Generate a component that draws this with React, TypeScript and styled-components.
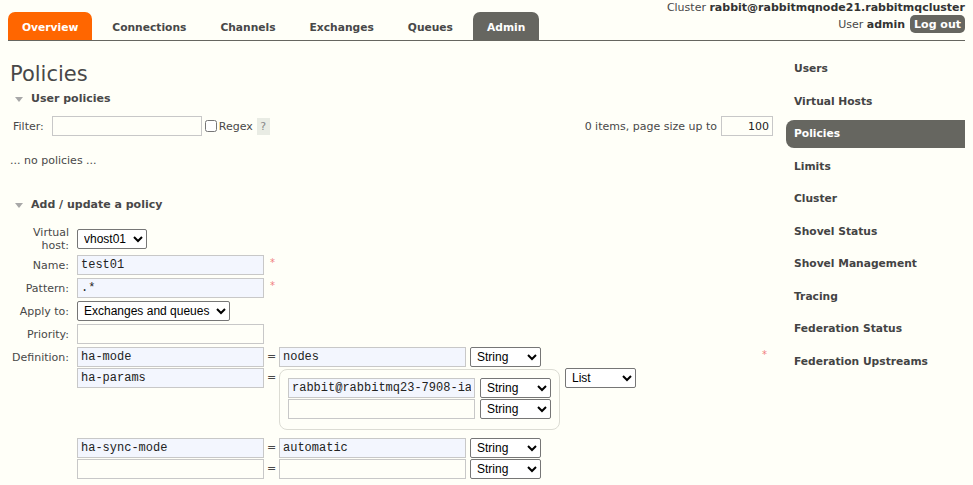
import React from "react";
import styled, { createGlobalStyle, css } from "styled-components";

const GlobalStyle = createGlobalStyle`
  html, body {
    margin: 0;
    background: #fffff8;
  }
  body {
    font: 11px "DejaVu Sans", Verdana, sans-serif;
    color: #484848;
  }
  * {
    box-sizing: border-box;
  }
`;

const Header = styled.header`
  display: flex;
  justify-content: space-between;
  align-items: flex-end;
  margin: 0 8px;
  height: 41px;
  border-bottom: 1px solid #666660;
`;

const Tabs = styled.ul`
  display: flex;
  gap: 6px;
  list-style: none;
  margin: 0;
  padding: 0;
`;

const Tab = styled.li<{ $tone?: "orange" | "grey" }>`
  height: 28px;
  padding: 2px 14px 0;
  display: flex;
  align-items: center;
  font-size: 10.7px;
  font-weight: bold;
  border-radius: 7px 7px 0 0;
  color: #484848;
  ${(p) =>
    p.$tone === "orange" &&
    css`
      background: #ff6600;
      color: #fff;
    `}
  ${(p) =>
    p.$tone === "grey" &&
    css`
      background: #666660;
      color: #fff;
    `}
`;

const Session = styled.div`
  align-self: stretch;
  display: flex;
  flex-direction: column;
  align-items: flex-end;
  padding-top: 1px;
  line-height: 13px;

  b {
    color: #333;
  }
`;

const UserLine = styled.div`
  display: flex;
  align-items: center;
  gap: 5px;
  margin-top: 1px;
`;

const LogoutButton = styled.button`
  height: 18px;
  padding: 0 4px;
  border: none;
  border-radius: 5px;
  background: #666660;
  color: #fff;
  font: bold 11px "DejaVu Sans", Verdana, sans-serif;
`;

const Page = styled.div`
  display: flex;
  align-items: flex-start;
`;

const Main = styled.main`
  flex: 1;
  min-width: 0;
  padding: 0 13px 0 10px;
`;

const Title = styled.h1`
  margin: 21px 0 0;
  font-size: 21px;
  line-height: 24px;
  font-weight: normal;
  color: #484848;
`;

const SectionHead = styled.h2<{ $top: number }>`
  display: flex;
  align-items: center;
  gap: 8px;
  margin: ${(p) => p.$top}px 0 0;
  padding-left: 5px;
  font-size: 11px;
  line-height: 14px;
  font-weight: bold;
  color: #484848;

  &::before {
    content: "";
    border-left: 4.5px solid transparent;
    border-right: 4.5px solid transparent;
    border-top: 5px solid #a8a8a8;
  }
`;

const FilterBar = styled.div`
  display: flex;
  align-items: center;
  height: 20px;
  margin-top: 10px;
  padding-left: 3px;
`;

const Field = styled.input<{ $w: number; $filled?: boolean; $right?: boolean }>`
  width: ${(p) => p.$w}px;
  height: 20px;
  padding: 0 3px;
  border: 1px solid #c8c8c8;
  background: ${(p) => (p.$filled ? "#f3f6fe" : "#fffff8")};
  font: 12px "Liberation Mono", "Courier New", monospace;
  color: #222;
  text-align: ${(p) => (p.$right ? "right" : "left")};
  outline: none;
`;

const PlainField = styled(Field)`
  font: 11px "DejaVu Sans", Verdana, sans-serif;
`;

const Check = styled.input`
  margin: 0 2px 0 3px;
  width: 12px;
  height: 12px;
`;

const Help = styled.span`
  display: inline-block;
  width: 13px;
  height: 17px;
  line-height: 17px;
  text-align: center;
  background: #e9ece4;
  color: #888;
`;

const Spacer = styled.div`
  flex: 1;
`;

const Empty = styled.p`
  margin: 18px 0 0;
  line-height: 14px;
`;

const Form = styled.div`
  display: grid;
  grid-template-columns: 59px 1fr;
  column-gap: 8px;
  row-gap: 3px;
  margin-top: 14px;
  align-items: center;
`;

const Label = styled.label<{ $top?: boolean }>`
  text-align: right;
  line-height: 13px;
  ${(p) =>
    p.$top &&
    css`
      align-self: start;
      padding-top: 4px;
    `}
`;

const Line = styled.div`
  display: flex;
  align-items: flex-start;
`;

const Select = styled.select<{ $w: number }>`
  width: ${(p) => p.$w}px;
  height: 20px;
  font: 12px "Liberation Sans", Arial, sans-serif;
  color: #000;
  background: #fff;
  border: 1px solid #767676;
  border-radius: 2px;
  padding: 0 2px;
`;

const Star = styled.span`
  color: #f08080;
  font-size: 10px;
  line-height: 10px;
  margin: 3px 0 0 6px;
`;

const Definition = styled.div`
  display: flex;
  flex-direction: column;
  gap: 1px;
`;

const Pair = styled.div<{ $gapBelow?: number }>`
  display: flex;
  align-items: flex-start;
  margin-bottom: ${(p) => p.$gapBelow || 0}px;
`;

const Eq = styled.span`
  width: 15px;
  line-height: 20px;
  text-align: center;
`;

const TypeSelect = styled(Select)<{ $gap?: number }>`
  margin-left: ${(p) => p.$gap ?? 4}px;
`;

const ListBox = styled.div`
  display: flex;
  flex-direction: column;
  gap: 1px;
  margin-top: 1px;
  padding: 8px 8px 10px;
  border: 1px solid #dcdcd4;
  border-radius: 8px;
`;

const DefStar = styled(Star)`
  margin-left: auto;
  margin-right: 6px;
`;

const HelpLine = styled.div`
  display: flex;
  align-items: center;
  gap: 4px;
  margin-top: 4px;
  padding-left: 3px;
  line-height: 17px;
  white-space: nowrap;
`;

const Sidebar = styled.nav`
  display: flex;
  flex-direction: column;
  width: 179px;
  margin: 12px 8px 0 0;
`;

const NavItem = styled.a<{ $active?: boolean }>`
  display: block;
  margin: 2.25px 0;
  padding: 7px 8px;
  line-height: 14px;
  font-size: 10.7px;
  font-weight: bold;
  color: #444;
  text-decoration: none;
  border-radius: 8px 0 0 8px;
  ${(p) =>
    p.$active &&
    css`
      background: #666660;
      color: #fff;
    `}
`;

const tabs = ["Overview", "Connections", "Channels", "Exchanges", "Queues", "Admin"];
const adminLinks = [
  "Users",
  "Virtual Hosts",
  "Policies",
  "Limits",
  "Cluster",
  "Shovel Status",
  "Shovel Management",
  "Tracing",
  "Federation Status",
  "Federation Upstreams",
];

export default function App(): React.ReactElement {
  return (
    <>
      <GlobalStyle />
      <Header>
        <Tabs>
          {tabs.map((t) => (
            <Tab
              key={t}
              $tone={t === "Overview" ? "orange" : t === "Admin" ? "grey" : undefined}
            >
              {t}
            </Tab>
          ))}
        </Tabs>
        <Session>
          <span>
            Cluster <b>rabbit@rabbitmqnode21.rabbitmqcluster</b>
          </span>
          <UserLine>
            <span>
              User <b>admin</b>
            </span>
            <LogoutButton type="button">Log out</LogoutButton>
          </UserLine>
        </Session>
      </Header>

      <Page>
        <Main>
          <Title>Policies</Title>
          <SectionHead $top={6}>User policies</SectionHead>
          <FilterBar>
            <span style={{ marginRight: 8 }}>Filter:</span>
            <PlainField $w={150} />
            <Check type="checkbox" />
            <span style={{ marginRight: 4 }}>Regex</span>
            <Help>?</Help>
            <Spacer />
            <span style={{ marginRight: 4 }}>0 items, page size up to</span>
            <PlainField $w={52} $right defaultValue="100" />
          </FilterBar>
          <Empty>... no policies ...</Empty>

          <SectionHead $top={30}>Add / update a policy</SectionHead>
          <Form>
            <Label>
              Virtual
              <br />
              host:
            </Label>
            <Line>
              <Select $w={70} defaultValue="vhost01">
                <option>vhost01</option>
              </Select>
            </Line>

            <Label>Name:</Label>
            <Line>
              <Field $w={187} $filled defaultValue="test01" />
              <Star>*</Star>
            </Line>

            <Label>Pattern:</Label>
            <Line>
              <Field $w={187} $filled defaultValue=".*" />
              <Star>*</Star>
            </Line>

            <Label>Apply to:</Label>
            <Line>
              <Select $w={153} defaultValue="Exchanges and queues">
                <option>Exchanges and queues</option>
                <option>Exchanges</option>
                <option>Queues</option>
              </Select>
            </Line>

            <Label>Priority:</Label>
            <Line>
              <Field $w={187} />
            </Line>

            <Label $top>Definition:</Label>
            <Line>
              <Definition>
                <Pair>
                  <Field $w={187} $filled defaultValue="ha-mode" />
                  <Eq>=</Eq>
                  <Field $w={187} $filled defaultValue="nodes" />
                  <TypeSelect $w={71}>
                    <option>String</option>
                  </TypeSelect>
                </Pair>
                <Pair $gapBelow={7}>
                  <Field $w={187} $filled defaultValue="ha-params" />
                  <Eq>=</Eq>
                  <ListBox>
                    <Pair>
                      <Field $w={187} $filled defaultValue="rabbit@rabbitmq23-7908-iaas" />
                      <TypeSelect $w={71} $gap={5}>
                        <option>String</option>
                      </TypeSelect>
                    </Pair>
                    <Pair>
                      <Field $w={187} />
                      <TypeSelect $w={71} $gap={5}>
                        <option>String</option>
                      </TypeSelect>
                    </Pair>
                  </ListBox>
                  <TypeSelect $w={71} $gap={5}>
                    <option>List</option>
                  </TypeSelect>
                </Pair>
                <Pair>
                  <Field $w={187} $filled defaultValue="ha-sync-mode" />
                  <Eq>=</Eq>
                  <Field $w={187} $filled defaultValue="automatic" />
                  <TypeSelect $w={71}>
                    <option>String</option>
                  </TypeSelect>
                </Pair>
                <Pair>
                  <Field $w={187} />
                  <Eq>=</Eq>
                  <Field $w={187} />
                  <TypeSelect $w={71}>
                    <option>String</option>
                  </TypeSelect>
                </Pair>
              </Definition>
              <DefStar>*</DefStar>
            </Line>

            <span />
            <HelpLine>
              <span>Dead letter exchange</span>
              <Help>?</Help>
              <span>| Auto expire</span>
              <Help>?</Help>
              <span>| Max length bytes</span>
              <Help>?</Help>
              <span>| Overflow behaviour | Message TTL | Lazy</span>
              <Help>?</Help>
            </HelpLine>
          </Form>
        </Main>

        <Sidebar>
          {adminLinks.map((l) => (
            <NavItem key={l} href="#" $active={l === "Policies"}>
              {l}
            </NavItem>
          ))}
        </Sidebar>
      </Page>
    </>
  );
}
